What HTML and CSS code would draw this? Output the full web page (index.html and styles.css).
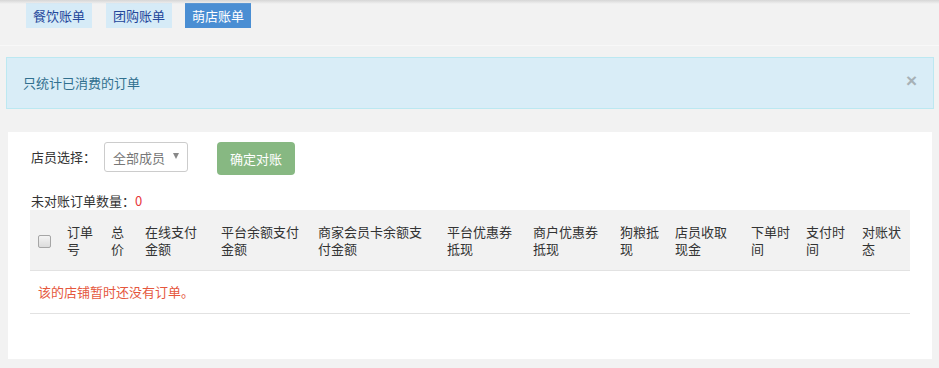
FILE: index.html
```html
<!DOCTYPE html>
<html lang="zh-CN">
<head>
<meta charset="utf-8">
<title>萌店账单</title>
<link rel="stylesheet" href="styles.css">
</head>
<body>
<div class="topshade"></div>
<nav class="tabs">
  <a class="tab">餐饮账单</a>
  <a class="tab">团购账单</a>
  <a class="tab active">萌店账单</a>
</nav>
<div class="alert">
  <span class="alert-text">只统计已消费的订单</span>
  <span class="alert-close">×</span>
</div>
<section class="panel">
  <div class="form-row">
    <span class="label">店员选择：</span>
    <div class="select"><span>全部成员</span><span class="caret"></span></div>
    <button class="btn">确定对账</button>
  </div>
  <div class="count">未对账订单数量：<span class="zero">0</span></div>
  <table class="orders">
    <colgroup>
      <col class="w29"><col class="w44"><col class="w34"><col class="w76"><col class="w97"><col class="w129"><col class="w86"><col class="w87"><col class="w55"><col class="w76"><col class="w55"><col class="w56"><col class="w56">
    </colgroup>
    <thead>
      <tr>
        <th class="chk-cell"><span class="chk"></span></th>
        <th>订单号</th>
        <th>总价</th>
        <th>在线支付金额</th>
        <th>平台余额支付金额</th>
        <th>商家会员卡余额支付金额</th>
        <th>平台优惠券抵现</th>
        <th>商户优惠券抵现</th>
        <th>狗粮抵现</th>
        <th>店员收取现金</th>
        <th>下单时间</th>
        <th>支付时间</th>
        <th>对账状态</th>
      </tr>
    </thead>
    <tbody>
      <tr><td colspan="13" class="empty">该的店铺暂时还没有订单。</td></tr>
    </tbody>
  </table>
</section>
</body>
</html>
```
FILE: styles.css
```css
html, body {
  margin: 0;
  padding: 0;
}
body {
  background: #f2f2f2;
  font-family: "Noto Sans CJK SC", "Noto Sans", "Liberation Sans", sans-serif;
  font-size: 13px;
  color: #333;
  width: 939px;
  height: 368px;
  overflow: hidden;
  position: relative;
}
.topshade {
  position: absolute;
  left: 0; top: 0; right: 0;
  height: 4px;
  background: linear-gradient(#d6d6d6, rgba(242,242,242,0));
}
.tabs {
  display: flex;
  gap: 14px;
  padding: 3px 0 17px 26px;
  border-bottom: 1px solid #f8f8f8;
  height: 25px;
}
.tab {
  display: block;
  width: 66px;
  height: 25px;
  line-height: 25px;
  text-align: center;
  background: #d6ebf7;
  color: #24479b;
  font-size: 13px;
}
.tab.active {
  background: #4a8ed3;
  color: #fff;
  margin-left: -1px;
}
.alert {
  margin: 11px 5px 0 6px;
  height: 50px;
  border: 1px solid #bce8f1;
  background: #d9edf7;
  color: #31708f;
  display: flex;
  align-items: center;
  justify-content: space-between;
  padding: 0 16px 0 16px;
}
.alert-text {
  font-size: 13px;
  line-height: 18px;
  margin-top: -1px;
}
.alert-close {
  color: #a7b1b6;
  font-weight: bold;
  font-size: 19px;
  line-height: 18px;
  margin-top: -4px;
  font-family: "Liberation Sans", sans-serif;
}
.panel {
  margin: 23px 7px 0 8px;
  background: #fff;
  height: 227px;
  box-sizing: border-box;
  padding: 10px 22px 0 22px;
}
.form-row {
  display: flex;
  align-items: flex-start;
  height: 33px;
}
.label {
  line-height: 30px;
  margin-left: 1px;
  width: 73px;
}
.select {
  height: 28px;
  border: 1px solid #ccc;
  border-radius: 3px;
  display: flex;
  align-items: center;
  justify-content: space-between;
  padding: 0 8px 0 8px;
  box-sizing: content-box;
  width: 66px;
  color: #777;
}
.caret {
  width: 0;
  height: 0;
  border-left: 3px solid transparent;
  border-right: 3px solid transparent;
  border-top: 6px solid #888;
  margin-top: -3px;
}
.btn {
  margin-left: 29px;
  width: 78px;
  height: 33px;
  border: none;
  border-radius: 4px;
  background: #87b882;
  color: #fff;
  font-family: inherit;
  font-size: 13px;
  padding: 0;
}
.count {
  margin-top: 17px;
  line-height: 18px;
  height: 18px;
  margin-left: 1px;
}
.zero {
  color: #e8363a;
}
.orders {
  width: 880px;
  table-layout: fixed;
  border-collapse: collapse;
}
.w29 { width: 29px; }
.w44 { width: 44px; }
.w34 { width: 34px; }
.w76 { width: 76px; }
.w97 { width: 97px; }
.w129 { width: 129px; }
.w86 { width: 86px; }
.w87 { width: 87px; }
.w55 { width: 55px; }
.w56 { width: 56px; }
.orders thead tr {
  background: #f2f2f2;
  border-bottom: 1px solid #e2e2e2;
}
.orders th {
  font-weight: normal;
  text-align: left;
  vertical-align: middle;
  padding: 13px 8px;
  line-height: 17px;
  height: 34px;
  color: #333;
}
.orders th.chk-cell {
  padding: 0 0 0 8px;
}
.chk {
  display: block;
  width: 11px;
  height: 11px;
  border: 1px solid #a6a6a6;
  border-radius: 2px;
  background: linear-gradient(#f4f4f4, #dcdcdc);
  margin-top: 3px;
}
.orders td.empty {
  padding: 12px 8px;
  line-height: 18px;
  color: #e5573d;
  border-bottom: 1px solid #e2e2e2;
}
```
